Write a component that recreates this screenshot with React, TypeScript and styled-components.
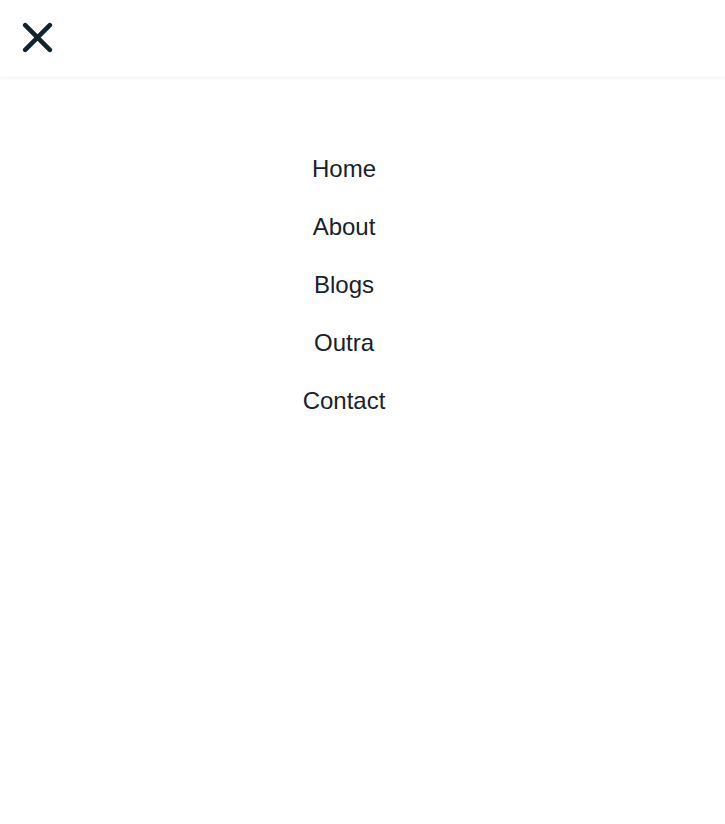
import styled, { createGlobalStyle } from "styled-components"

const GlobalStyle = createGlobalStyle`
    body {
        margin: 0;
        background: #ffffff;
        font-family: "Liberation Sans", Arial, sans-serif;
    }
`

const Header = styled.header`
    height: 78px;
    display: flex;
    align-items: center;
    padding: 0 22px;
    box-sizing: border-box;
    background: #ffffff;
    box-shadow: 0 1px 3px rgba(0, 0, 0, 0.04);
    border-bottom: 1px solid #f6f7f7;
`

const CloseButton = styled.button`
    width: 31px;
    height: 31px;
    padding: 0;
    border: none;
    background: transparent;
    display: flex;
    align-items: center;
    justify-content: center;
    cursor: pointer;
    margin-top: -3px;
`

const Menu = styled.nav`
    padding: 62px 37px 0 0;
`

const Lista = styled.ul`
    list-style: none;
    margin: 0;
    padding: 0;
    display: flex;
    flex-direction: column;
    align-items: center;
`

const Item = styled.li`
    line-height: 58px;
    font-size: 24px;

    a {
        color: #17222d;
        text-decoration: none;
    }
`

const links = ["Home", "About", "Blogs", "Outra", "Contact"]

const App = () => {
    return (
        <>
            <GlobalStyle />
            <Header>
                <CloseButton aria-label="Fechar menu">
                    <svg width="31" height="31" viewBox="0 0 31 31" fill="none">
                        <path
                            d="M3.2 3.2 L27.8 27.8 M27.8 3.2 L3.2 27.8"
                            stroke="#10232f"
                            strokeWidth="4.6"
                            strokeLinecap="round"
                        />
                    </svg>
                </CloseButton>
            </Header>
            <Menu>
                <Lista>
                    {links.map(item => (
                        <Item key={item}>
                            <a href="#">{item}</a>
                        </Item>
                    ))}
                </Lista>
            </Menu>
        </>
    )
}

export default App
